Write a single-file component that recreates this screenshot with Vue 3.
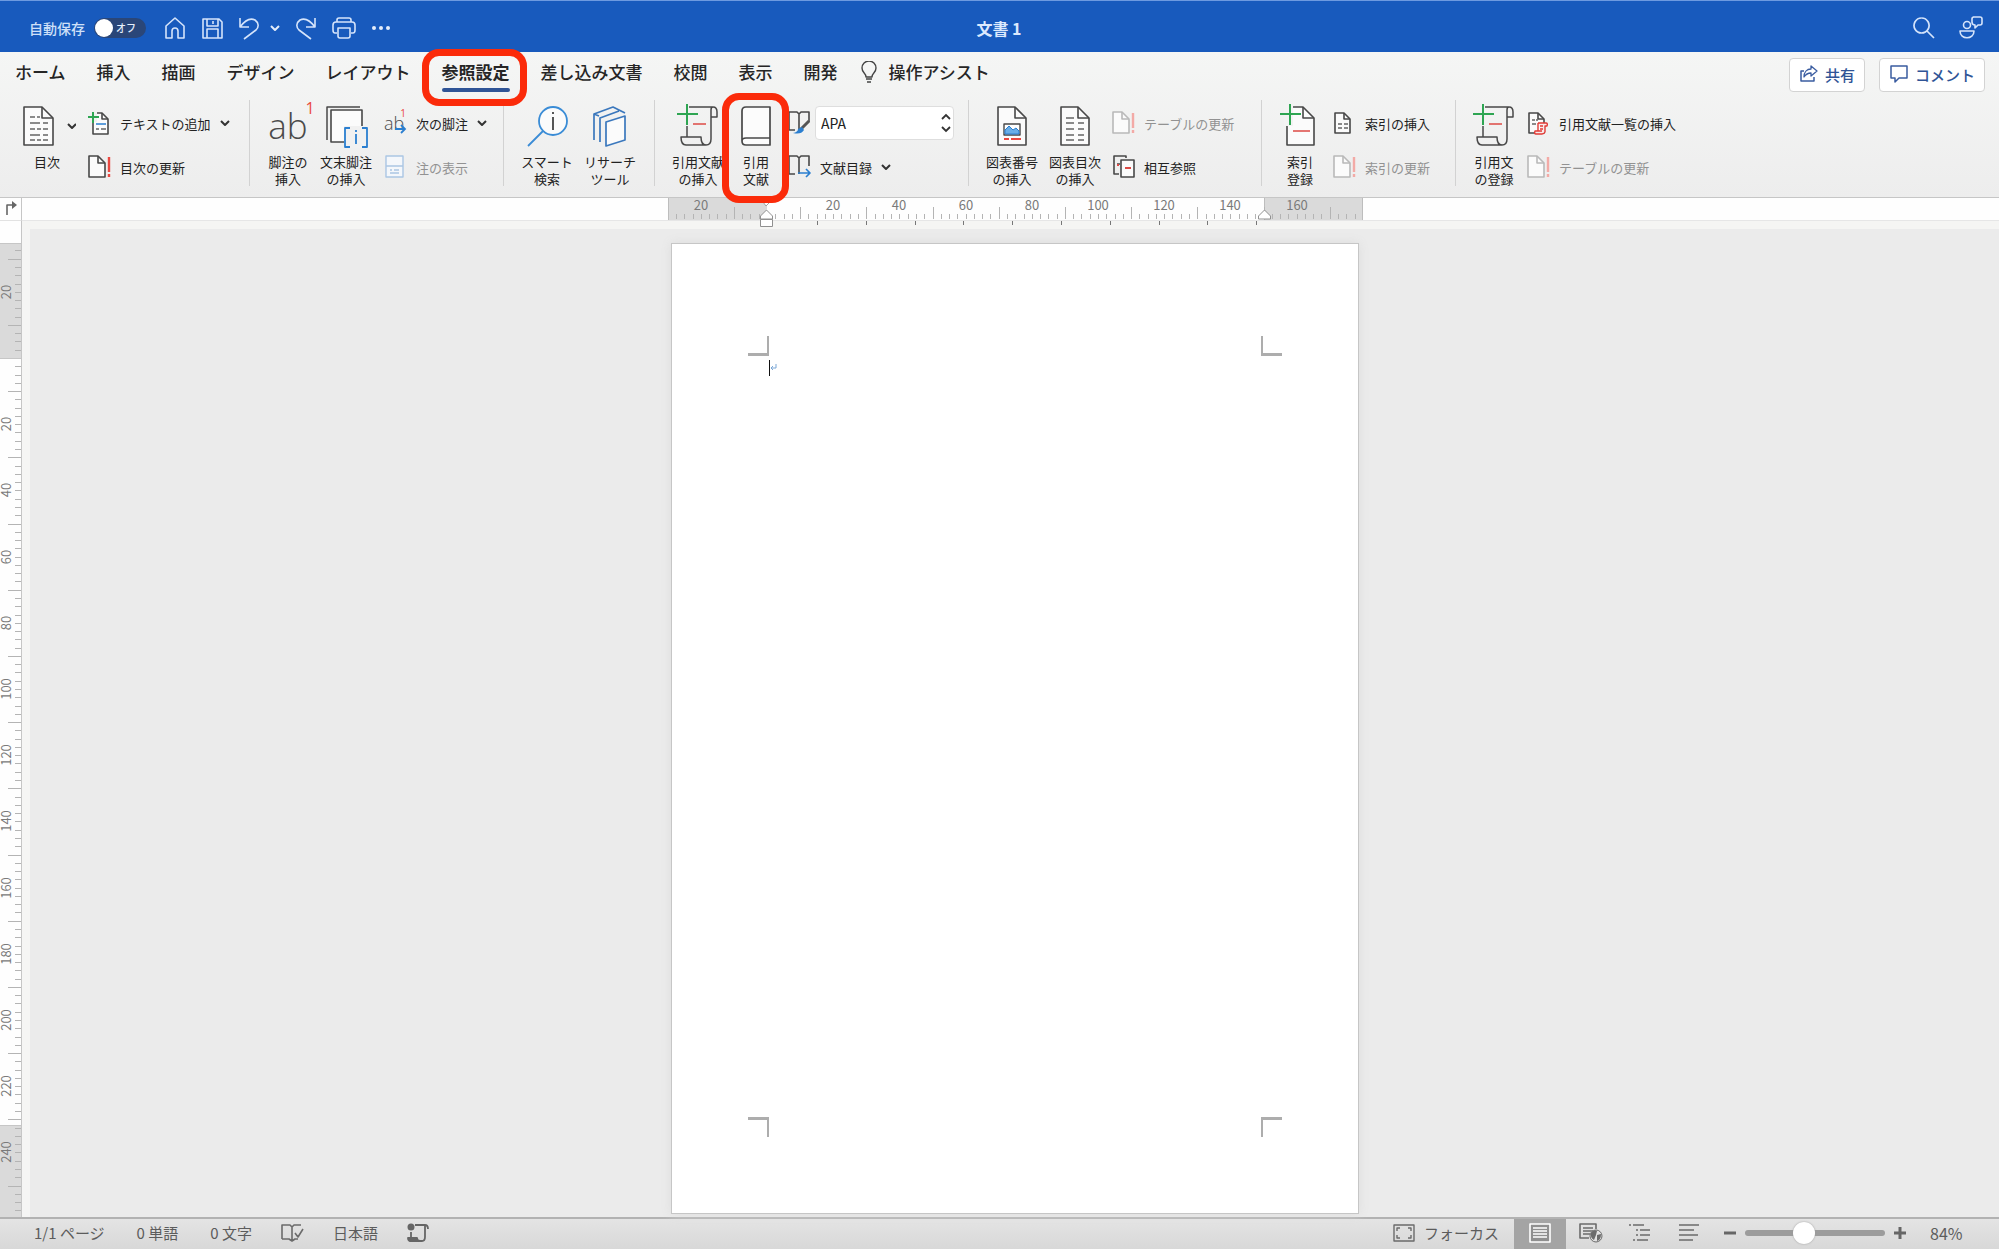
<script setup>
import { h } from 'vue'

const INK = '#484848'
const BLUE = '#2b7fd0'
const GREEN = '#2ea552'
const RED = '#dd4a45'

const line = (d, color = INK, width = 1.5, fill = 'none') =>
  `<path d="${d}" stroke="${color}" stroke-width="${width}" fill="${fill}" stroke-linejoin="round"/>`
const sheet = (x, y, w, ht, f, color = INK) =>
  line(`M${x} ${y}h${w - f}l${f} ${f}v${ht - f}h${-w}z`, color, 1.6, '#fbfbfb') +
  line(`M${x + w - f} ${y}v${f}h${f}`, color, 1.6)
const caret = (x, y) => line(`M${x} ${y}l4 4 4-4`, '#333', 2)
const bang = (x, color) => line(`M${x} 3v15M${x} 20v3`, color, 2.4)
const scroll =
  line('M14 3h24c3 0 4 2 4 5v5h-6V6c0-2 1-3 2-3M36 12v23c0 4-2 6-5 6H11c-4 0-5-3-5-8h20c0 4 1 8 5 8M12 33V22') +
  line('M18 20h13', RED) + line('M2 10h21M12 0v21', GREEN, 2)
const updateSheet = (c, r) => sheet(1, 2, 16, 21, 7, c) + bang(21, r)
const openBook = line('M0 2h9l2 2 2-2h8v10M11 4v16M1 2v18h6', INK, 1.6)

const glyphs = {
  home: [22, 24, line('M2 10L11 2l9 8v12h-6v-7q0-3-3-3t-3 3v7H2z', '#d5e4fb', 1.6)],
  save: [22, 24, line('M2 3h16l3 3v16H2zM6 3v7h11V3M6 22v-9h11v9M12 5v3', '#d5e4fb', 1.6)],
  undo: [22, 24, line('M2 2v9h9M2 11C8 3 13 2 17 4c4 3 4 7 1 10l-12 9', '#d5e4fb', 1.6)],
  redo: [22, 24, line('M20 2v9h-9M20 11C14 3 9 2 5 4c-4 3-4 7-1 10l12 9', '#d5e4fb', 1.6)],
  print: [24, 24, line('M5 17H3q-2 0-2-3V9q0-3 3-3h16q3 0 3 3v5q0 3-2 3h-2M5 6V4q0-2 2-2h10q2 0 2 2v2M6 12h12v8q0 2-2 2H8q-2 0-2-2z', '#d5e4fb', 1.6)],
  more: [20, 8, '<g fill="#e4edfb"><circle cx="3" cy="4" r="2"/><circle cx="10" cy="4" r="2"/><circle cx="17" cy="4" r="2"/></g>'],
  caretLight: [10, 8, line('M1 2l4 4 4-4', '#e4edfb', 2)],
  search: [22, 22, line('M8.500 1a7.500 7.500 0 1 0 .1 0M14 14l7 7', '#d5e4fb', 1.7)],
  people: [24, 24, '<circle cx="8" cy="9" r="3.500" fill="none" stroke="#d5e4fb" stroke-width="1.600"/>' + line('M1 15h14c0 9-14 9-14 0zM14 1h7q2 0 2 2v4q0 2-2 2h-2l-3 3V9q-3 0-3-3V3q0-2 2-2', '#d5e4fb', 1.6)],
  bulb: [16, 22, line('M5 16c0-4-4-4-4-9a7 7 0 0 1 14 0c0 5-4 5-4 9zM5 18h6M6 21h4', '#444', 1.4)],
  share: [18, 18, line('M4 6H1v10h13v-4', '#3a5ca0', 1.5) + line('M4 12c0-5 3-8 7-8V1l6 5-6 5V8c-3 0-5 1-7 4z', '#3a5ca0', 1.3)],
  comment: [18, 18, line('M1 1h16v12H9l-4 4v-4H1z', '#3a5ca0', 1.5)],
  caret: [12, 10, caret(2, 3)],
  toc: [58, 44, sheet(6, 3, 29, 38, 11) + line('M12 13h5m2 0h3M12 19h10m3 0h5M12 25h5m2 0h4m2 0h5M12 31h10m3 0h5M12 36h5m2 0h4m2 0h5', '#666', 1.3) + caret(50, 20)],
  addText: [24, 26, sheet(5, 3, 15, 21, 6) + line('M8 19h3m2 0h5', '#666') + line('M8 14h10', BLUE) + '<path d="M1 1h8v11H1z" fill="#f1f1f1"/>' + line('M0 7h11M5 2v11', GREEN, 2)],
  update: [24, 26, updateSheet(INK, '#ea4840')],
  updateOff: [24, 26, updateSheet('#b9b9b9', '#f3aaa6')],
  endnote: [48, 44, line('M5 36V3h33') + line('M9 6h31v32H9z', INK, 1.6, '#fbfbfb') + '<path d="M22 22h28v22H22z" fill="#f1f1f1"/>' + line('M28 24h-5v19h5M40 24h5v19h-5M34 30v10M34 26v2', BLUE, 1.8)],
  noteView: [24, 26, line('M2 2h17v21H2zM2 12h17M6 16h2m2 0h5M6 19h9', '#abc6e4', 1.4, '#f4f7fb')],
  smart: [44, 44, '<circle cx="28" cy="17" r="14" fill="#fbfbfb" stroke="#3a8cd6" stroke-width="1.800"/>' + line('M18 27L3 42', '#3a8cd6', 1.8) + line('M28 13v13M28 8v2', '#444', 1.8)],
  research: [40, 44, line('M4 36V10l19-7 12 6M4 10l5 2M10 38V14l19-7', '#3b78bd', 1.7) + line('M16 18l19-6v24l-19 6z', '#3b78bd', 1.7, '#fbfbfb')],
  cite: [46, 44, scroll],
  book: [32, 44, line('M6 3h24v38H6q-4 0-4-4V7q0-4 4-4zM2 37q0-3 4-3h24', INK, 1.7, '#fcfcfc')],
  bookStyle: [24, 26, openBook + line('M21 11l-9 9', '#555', 3) + '<path d="M5 23q5-1 5-4l4-2 2 3q-3 5-11 3z" fill="#2b7fd0"/>'],
  bookList: [24, 26, openBook + line('M10 19h12M18 15l4 4-4 4', BLUE, 1.7)],
  picture: [32, 44, sheet(2, 3, 28, 38, 11) + line('M8 20h16v11H8z', INK, 1.4, '#fff') + '<path d="M9 30v-4l4-4 4 4 3-2 3 3v3z" fill="#69aee8" stroke="#2b7fd0"/>' + line('M8 35h5m2 0h10', '#ea4840', 1.8)],
  figures: [32, 44, sheet(2, 3, 28, 38, 11) + line('M7 14h8M7 19h8m4 0h6M7 25h8m4 0h6M7 31h8m4 0h6M7 36h8m4 0h6', '#666', 1.3)],
  crossRef: [24, 26, line('M7 20H2V2h12v2M5 10h3', INK, 1.6) + line('M9 6h13v17H9z', INK, 1.6, '#fbfbfb') + line('M13 14h6M5 11h2', RED, 2)],
  indexMark: [44, 44, sheet(9, 3, 27, 38, 11) + '<path d="M6 0h9v22H6z" fill="#f3f3f3"/>' + line('M15 27h17', RED) + line('M2 10h21M12 0v21', GREEN, 2)],
  index: [24, 26, sheet(2, 3, 15, 20, 6) + line('M5 14h4m2 0h4M5 18h4m2 0h4', '#666', 1.3)],
  authorities: [24, 26, sheet(2, 3, 15, 20, 6) + line('M5 10h3m1 0h2M5 14h4', '#666', 1.3) + line('M11 13h8q2 0 1 3h-2v6q-1 2-3 2H9q-2 0-1-3h7M11 13v8M13 16h3m-3 3h3', '#e23a35', 1.4, '#f8eaea')],
  proof: [24, 20, line('M1 16V2h8l2 2 2-2h7M1 16h7l3 2 3-2h3M11 4v14M14 10l3 4 5-8', '#6b6b6b', 1.6)],
  macro: [22, 20, '<circle cx="4" cy="4" r="3.500" fill="#666"/>' + line('M8 2h10v12q0 4-3 4H4q-3 0-3-3h9q0 3 3 3M4 9v6M18 2q3 0 3 4', '#666', 1.8) + '<path d="M1 15h9l2 4H4q-3 0-3-4z" fill="#666"/>'],
  focus: [22, 18, line('M1 1h20v16H1zM4 7V4h3M15 4h3v3M18 11v3h-3M7 14H4v-3', '#6b6b6b', 1.4)],
  pageView: [22, 20, line('M1 1h20v18H1z', '#fff', 1.6, '#8f8f8f') + line('M4 5h14M4 8h14M4 11h14M4 14h14', '#fff', 1.3)],
  webView: [24, 20, line('M10 15H1V1h16v5M4 5h10M4 8h10M4 11h7', '#6b6b6b', 1.6) + '<circle cx="17" cy="13" r="6" fill="#e2e2e2" stroke="#6b6b6b"/><path d="M12 10q3-4 6-2l-1 4-2 5q-4-2-3-7zM18 12l4-1q0 6-4 7z" fill="#6b6b6b"/>'],
  outline: [24, 20, line('M1 2h2m2 0h11M8 7h2m2 0h10M8 12h2m2 0h10M5 17h2m2 0h11', '#6b6b6b', 1.6)],
  draft: [20, 20, line('M0 2h20M0 7h15M0 12h19M0 17h14', '#6b6b6b', 1.7)],
  tabStop: [12, 16, line('M2 15V5h7', '#666', 1.6) + '<path d="M7 1l5 4-5 4z" fill="#666"/>']
}

const Glyph = ({ name }) => {
  const [w, ht, body] = glyphs[name]
  return h('svg', { width: w, height: ht, viewBox: `0 0 ${w} ${ht}`, 'aria-hidden': 'true', innerHTML: body })
}
Glyph.props = ['name']

const tabs = ['ホーム', '挿入', '描画', 'デザイン', 'レイアウト', '参照設定', '差し込み文書', '校閲', '表示', '開発']
const active = '参照設定'

const groups = [
  { id: 'toc', big: [{ icon: 'toc', text: ['目次'] }], rows: [{ icon: 'addText', text: 'テキストの追加', menu: true }, { icon: 'update', text: '目次の更新' }] },
  { id: 'notes', big: [{ icon: '', text: ['脚注の', '挿入'] }, { icon: 'endnote', text: ['文末脚注', 'の挿入'] }], rows: [{ icon: 'ab', text: '次の脚注', menu: true }, { icon: 'noteView', text: '注の表示', off: true }] },
  { id: 'research', big: [{ icon: 'smart', text: ['スマート', '検索'] }, { icon: 'research', text: ['リサーチ', 'ツール'] }], rows: [] },
  { id: 'cites', big: [{ icon: 'cite', text: ['引用文献', 'の挿入'] }, { icon: 'book', text: ['引用', '文献'], marked: true }], rows: [{ icon: 'bookStyle', select: true }, { icon: 'bookList', text: '文献目録', menu: true }] },
  { id: 'figures', big: [{ icon: 'picture', text: ['図表番号', 'の挿入'] }, { icon: 'figures', text: ['図表目次', 'の挿入'] }], rows: [{ icon: 'updateOff', text: 'テーブルの更新', off: true }, { icon: 'crossRef', text: '相互参照' }] },
  { id: 'index', big: [{ icon: 'indexMark', text: ['索引', '登録'] }], rows: [{ icon: 'index', text: '索引の挿入' }, { icon: 'updateOff', text: '索引の更新', off: true }] },
  { id: 'law', big: [{ icon: 'cite', text: ['引用文', 'の登録'] }], rows: [{ icon: 'authorities', text: '引用文献一覧の挿入' }, { icon: 'updateOff', text: 'テーブルの更新', off: true }] }
]

// Ruler marks: one step is 2.5 units, tall marks stand between the numbered ones.
const step = 8.275
function marks(origin, length) {
  const out = []
  const from = -Math.floor(origin / step)
  const to = Math.floor((length - origin - 1) / step)
  for (let i = from; i <= to; i++) {
    if (i === 0) continue
    out.push({ i, at: Math.round(origin + i * step), tall: Math.abs(i) % 8 === 4, label: i % 8 === 0 ? Math.abs(i) * 2.5 : null })
  }
  return out
}
const across = marks(99, 695)
const down = marks(137, 996).filter(m => m.at > 24)
const stops = Array.from({ length: 10 }, (_, i) => 149 + Math.round(i * 48.8))
</script>

<template>
  <div class="app">
    <header class="titlebar">
      <div class="quick">
        <label class="autosave">自動保存
          <span class="switch"><input type="checkbox" /><span class="knob"></span>オフ</span>
        </label>
        <button class="plain" aria-label="ホーム"><Glyph name="home" /></button>
        <button class="plain" aria-label="保存"><Glyph name="save" /></button>
        <button class="plain undo" aria-label="元に戻す"><Glyph name="undo" /><Glyph name="caretLight" /></button>
        <button class="plain" aria-label="やり直し"><Glyph name="redo" /></button>
        <button class="plain" aria-label="印刷"><Glyph name="print" /></button>
        <button class="plain" aria-label="その他"><Glyph name="more" /></button>
      </div>
      <h1>文書 1</h1>
      <div class="tools">
        <button class="plain" aria-label="検索"><Glyph name="search" /></button>
        <button class="plain" aria-label="共同編集"><Glyph name="people" /></button>
      </div>
    </header>

    <section class="ribbon">
      <nav class="tabs">
        <button v-for="t in tabs" :key="t" class="tab" :class="{ active: t === active }">{{ t }}<span v-if="t === active" class="mark"></span></button>
        <button class="tab assist"><Glyph name="bulb" />操作アシスト</button>
        <div class="actions">
          <button class="action"><Glyph name="share" />共有</button>
          <button class="action"><Glyph name="comment" />コメント</button>
        </div>
      </nav>
      <div class="commands">
        <div v-for="g in groups" :key="g.id" class="group" :class="g.id">
          <button v-for="b in g.big" :key="b.text[0]" class="big">
            <span class="picture">
              <Glyph v-if="b.icon" :name="b.icon" />
              <span v-else class="ab">ab<sup>1</sup></span>
            </span>
            <span v-for="l in b.text" :key="l" class="text">{{ l }}</span>
            <span v-if="b.marked" class="mark"></span>
          </button>
          <div v-if="g.rows.length" class="rows">
            <template v-for="r in g.rows" :key="r.icon">
              <div v-if="r.select" class="row">
                <Glyph :name="r.icon" />
                <span class="picker">
                  <select aria-label="引用文献のスタイル"><option>APA</option></select>
                  <svg width="12" height="20" viewBox="0 0 12 20"><path d="M2 6l4-4 4 4M2 14l4 4 4-4" fill="none" stroke="#333" stroke-width="1.800" /></svg>
                </span>
              </div>
              <button v-else class="row" :disabled="r.off">
                <span v-if="r.icon === 'ab'" class="ab small">ab<sup>1</sup><svg width="12" height="10" viewBox="0 0 12 10"><path d="M0 5h10M6 1l4 4-4 4" fill="none" stroke="#2b7fd0" stroke-width="1.800" /></svg></span>
                <Glyph v-else :name="r.icon" />
                {{ r.text }}
                <Glyph v-if="r.menu" name="caret" />
              </button>
            </template>
          </div>
        </div>
      </div>
    </section>

    <main class="workspace">
      <aside class="side">
        <button class="corner" aria-label="タブ"><Glyph name="tabStop" /></button>
        <svg width="22" height="996">
          <rect width="22" height="996" fill="#fefefe" />
          <rect y="22" width="22" height="115" fill="#dadada" />
          <rect y="904" width="22" height="92" fill="#dadada" />
          <path d="M0 22.500h22M0 137.500h22M0 904.500h22M21.500 0v996" stroke="#c6c6c6" />
          <g v-for="m in down" :key="m.i">
            <path :d="`M${m.tall ? 8 : 15} ${m.at + 0.5}h${m.tall ? 13 : 6}`" stroke="#b4b4b4" />
            <text v-if="m.label" :transform="`translate(11 ${m.at}) rotate(-90)`">{{ m.label }}</text>
          </g>
        </svg>
      </aside>
      <div class="desk">
        <div class="ruler">
          <svg width="695" height="32">
            <rect width="695" height="22" fill="#dadada" />
            <rect x="99" width="497" height="22" fill="#fefefe" />
            <path d="M.5 0v22M596.500 0v22M694.500 0v22" stroke="#bdbdbd" />
            <g v-for="m in across" :key="m.i">
              <path :d="`M${m.at + 0.5} ${m.tall ? 9 : 16}v${m.tall ? 12 : 5}`" stroke="#b4b4b4" />
              <text v-if="m.label" :x="m.at" y="12">{{ m.label }}</text>
            </g>
            <path v-for="s in stops" :key="s" :d="`M${s + 0.5} 23v4`" stroke="#777" />
            <path d="M92.500 21v-3l6-6 6 6v3zM92.500 21.500h12v7h-12zM590.500 21v-3l6-6 6 6v3z" fill="#fff" stroke="#909090" />
            <path d="M95 4l3 4 4-4" fill="#fff" stroke="#a0a0a0" />
          </svg>
        </div>
        <div class="canvas">
          <article class="page">
            <i class="crop tl"></i><i class="crop tr"></i><i class="crop bl"></i><i class="crop br"></i>
            <p class="caret"><svg width="8" height="8" viewBox="0 0 8 8"><path d="M6 0v4H1M3 2L1 4l2 2" fill="none" stroke="#7ba7d6" /></svg></p>
          </article>
        </div>
      </div>
    </main>

    <footer class="status">
      <button class="item">1/1 ページ</button>
      <button class="item">0 単語</button>
      <button class="item">0 文字</button>
      <button class="item symbol" aria-label="校正"><Glyph name="proof" /></button>
      <button class="item">日本語</button>
      <button class="item symbol" aria-label="マクロ"><Glyph name="macro" /></button>
      <div class="views">
        <button class="view focus"><Glyph name="focus" />フォーカス</button>
        <button class="view on" aria-label="印刷レイアウト"><Glyph name="pageView" /></button>
        <button class="view" aria-label="Web レイアウト"><Glyph name="webView" /></button>
        <button class="view" aria-label="アウトライン"><Glyph name="outline" /></button>
        <button class="view draft" aria-label="下書き"><Glyph name="draft" /></button>
        <button class="zoom" aria-label="縮小"><svg width="12" height="12"><path d="M0 6h12" stroke="#666" stroke-width="3" /></svg></button>
        <input type="range" min="0" max="100" value="41" aria-label="ズーム" />
        <button class="zoom" aria-label="拡大"><svg width="12" height="12"><path d="M0 6h12M6 0v12" stroke="#666" stroke-width="3" /></svg></button>
        <span class="percent">84%</span>
      </div>
    </footer>
  </div>
</template>

<style>
body { margin: 0; background: #fff; }
</style>

<style scoped>
.app {
  font-family: "Noto Sans CJK JP", "Noto Sans", sans-serif;
  color: #262626;
}
.app * { box-sizing: border-box; }
button { font: inherit; color: inherit; background: none; border: 0; padding: 0; white-space: nowrap; }
svg { display: block; flex: none; }

.titlebar {
  display: grid;
  grid-template-columns: 1fr auto 1fr;
  align-items: center;
  height: 52px;
  padding: 2px 16px 0 29px;
  border-top: 1px solid #6d9ae0;
  background: #185abd;
}
.titlebar h1 { margin: 0 14px 0 0; font-size: 16px; font-weight: 700; line-height: 22px; color: #dce9fd; }
.quick { display: flex; align-items: center; gap: 15px; }
.plain { display: flex; align-items: center; gap: 10px; }
.autosave { display: flex; align-items: center; gap: 9px; font-size: 14px; font-weight: 500; line-height: 20px; color: #cfe0f8; margin-right: 3px; }
.switch { position: relative; display: flex; align-items: center; justify-content: flex-end; width: 52px; height: 20px; padding-right: 10px; border-radius: 10px; background: #2a4678; font-size: 10px; color: #e6eefb; }
.switch input { position: absolute; inset: 0; margin: 0; opacity: 0; }
.knob { position: absolute; left: 1px; top: 1px; width: 18px; height: 18px; border-radius: 50%; background: #fff; }
.tools { display: flex; justify-content: flex-end; gap: 24px; }

.ribbon { background: linear-gradient(#f5f6f5, #ededed); border-bottom: 1px solid #c6c6c6; }
.tabs { display: flex; align-items: flex-start; gap: 31px; height: 48px; padding: 0 14px 0 15px; }
.tab { position: relative; height: 40px; font-size: 17px; font-weight: 500; line-height: 40px; }
.tab.active { font-weight: 700; }
.tab.active::after { content: ""; position: absolute; left: 0; right: 0; bottom: 0; height: 4px; border-radius: 2px; background: #2f5496; }
.assist { display: flex; align-items: center; gap: 12px; margin-left: -8px; }
.actions { display: flex; gap: 14px; margin: 6px 0 0 auto; }
.action { display: flex; align-items: center; gap: 7px; height: 34px; padding: 0 9px 2px 10px; border: 1px solid #d3d3d3; border-radius: 4px; background: #fff; color: #2f5496; font-size: 15px; font-weight: 500; }
.mark { position: absolute; z-index: 5; border: 7px solid #fb2b0a; border-radius: 17px; pointer-events: none; }
.tab .mark { inset: -3px -17px -14px -20px; }
.big .mark { inset: -7px -7px -17px -8px; }

.commands { display: flex; padding-bottom: 11px; }
.group { display: flex; gap: 7px; flex: none; height: 86px; padding-left: 12px; border-right: 1px solid #d2d2d2; }
.group:last-child { border-right: 0; }
.toc { width: 250px; padding-left: 18px; gap: 12px; }
.notes { width: 254px; gap: 6px; }
.notes .rows { padding-left: 6px; }
.research { width: 151px; padding-left: 17px; gap: 11px; }
.cites { width: 314px; padding-left: 17px; gap: 6px; }
.figures { width: 293px; padding-left: 17px; gap: 11px; }
.index { width: 194px; }
.big { position: relative; display: flex; flex-direction: column; align-items: center; width: 52px; padding-top: 4px; font-size: 13px; line-height: 17px; color: #222; }
.toc .big { width: 58px; }
.picture { display: flex; justify-content: center; width: 100%; height: 44px; margin-bottom: 5px; }
.ab { position: relative; font: 35px/44px "Open Sans", "Noto Sans", sans-serif; font-weight: 300; color: #4a4a4a; }
.ab sup { position: absolute; right: -7px; top: -5px; font-size: 16px; line-height: 18px; font-weight: 400; color: #ea4840; }
.ab.small { width: 24px; font-size: 18px; line-height: 26px; text-align: left; }
.ab.small sup { right: 2px; top: -6px; font-size: 10px; }
.ab.small svg { position: absolute; right: 1px; bottom: 2px; }
.rows { display: flex; flex-direction: column; align-items: flex-start; gap: 10px; padding-top: 6px; }
.row { display: flex; align-items: center; gap: 8px; height: 34px; font-size: 13px; color: #222; }
.row:disabled { color: #929292; }
.picker { position: relative; display: flex; align-items: center; margin-left: -5px; }
.picker select { appearance: none; width: 139px; height: 34px; padding: 0 5px; border: 1px solid #dedede; border-radius: 4px; background: #fff; font: inherit; font-size: 14px; color: #222; }
.picker svg { position: absolute; right: 2px; }

.workspace { display: flex; }
.side { flex: none; width: 22px; }
.corner { display: flex; align-items: center; justify-content: center; width: 22px; height: 23px; padding-bottom: 2px; background: #fefefe; border-right: 1px solid #c6c6c6; border-bottom: 1px solid #e2e2e2; }
text { font-size: 13px; fill: #7a7a7a; text-anchor: middle; }
.desk { flex: 1; display: flex; flex-direction: column; background: #ebebeb; }
.ruler { display: flex; justify-content: center; height: 31px; padding-left: 10px; background: linear-gradient(#fefefe 22px, #e6e6e6 22px, #e6e6e6 23px, #f5f5f3 23px); }
.canvas { flex: 1; display: flex; justify-content: center; padding: 14px 0 3px; border-left: 8px solid #f5f5f4; }
.page { position: relative; width: 688px; height: 971px; padding: 116px 97px; border: 1px solid #c6c6c6; background: #fff; box-shadow: 0 0 10px #dcdcdc; }
.crop { position: absolute; width: 21px; height: 20px; border: 0 solid #adadad; }
.tl { left: 76px; top: 92px; border-right-width: 2px; border-bottom-width: 3px; }
.tr { right: 76px; top: 92px; border-left-width: 2px; border-bottom-width: 3px; }
.bl { left: 76px; bottom: 76px; border-right-width: 2px; border-top-width: 3px; }
.br { right: 76px; bottom: 76px; border-left-width: 2px; border-top-width: 3px; }
.caret { display: flex; align-items: center; height: 16px; margin: 0; border-left: 1px solid #111; }

.status { display: flex; align-items: stretch; height: 32px; padding-left: 34px; gap: 32px; border-top: 2px solid #b2b2b2; background: linear-gradient(#e4e4e4, #d8d8d8); font-size: 15px; line-height: 20px; color: #5c5c5c; }
.status .item { display: flex; align-items: center; padding-bottom: 3px; }
.status .symbol { margin: 0 -4px 0 -3px; }
.views { display: flex; align-items: stretch; margin-left: auto; padding-right: 32px; }
.view { display: flex; align-items: center; justify-content: center; width: 49px; padding-bottom: 3px; }
.view.focus { width: auto; gap: 9px; padding-right: 15px; }
.view.on { width: 52px; background: #a4a4a4; }
.zoom { display: flex; align-items: center; margin: 0 9px; padding-bottom: 3px; }
.draft { margin-right: 2px; }
.views input { appearance: none; width: 140px; height: 6px; margin: 11px 0 0; border-radius: 3px; background: #9c9c9c; }
.views input::-webkit-slider-thumb { appearance: none; width: 22px; height: 22px; border-radius: 50%; background: #fff; box-shadow: 0 0 2px #999; }
.percent { width: 37px; margin-left: 15px; padding-top: 4px; font-size: 16px; }
</style>
